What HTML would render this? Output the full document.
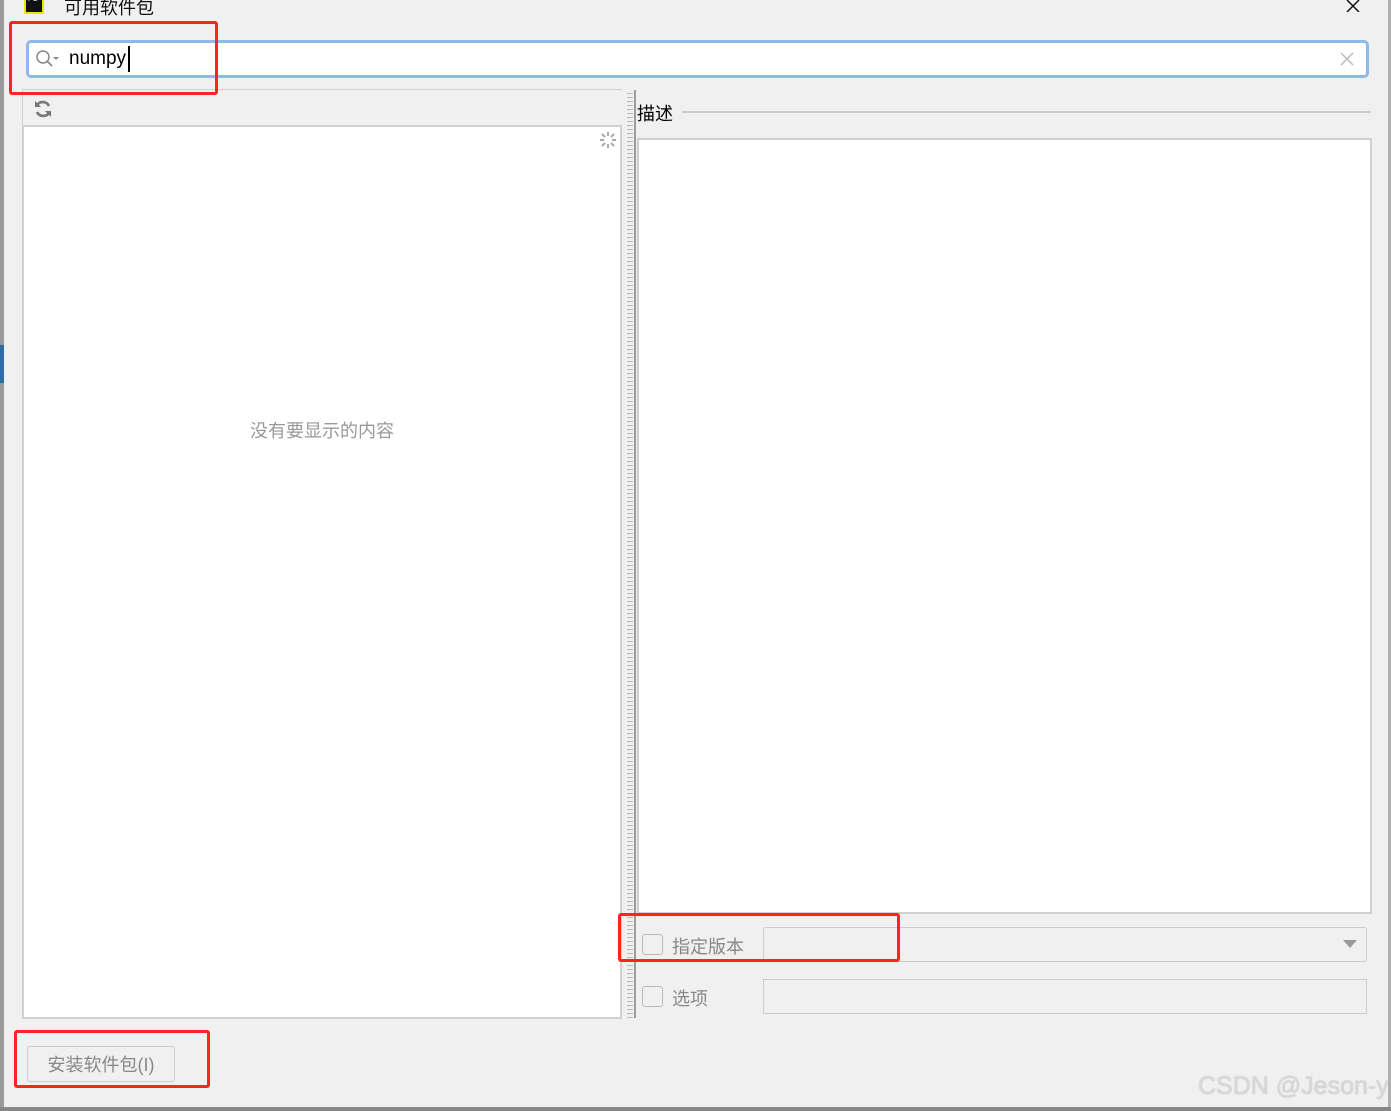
<!DOCTYPE html>
<html><head><meta charset="utf-8"><style>
*{box-sizing:border-box;margin:0;padding:0}
body{width:1391px;height:1111px;background:#f0f0f0;position:relative;overflow:hidden;font-family:"Liberation Sans","Noto Sans CJK SC",sans-serif}
.a{position:absolute}
.red{position:absolute;border:3px solid #f22;border-radius:3px}
</style></head><body>
<div class="a" style="left:0;top:0;width:4px;height:1111px;background:#9a9a9a"></div>
<div class="a" style="left:0;top:345px;width:4px;height:38px;background:#2d6ca8"></div>
<div class="a" style="left:1388px;top:0;width:3px;height:1111px;background:#b0b0b0"></div>
<div class="a" style="left:0;top:1107px;width:1391px;height:4px;background:#888"></div>
<div class="a" style="left:24px;top:-6px;width:20px;height:20px;background:#e4e800;padding:2px"><div style="width:16px;height:16px;background:#111;color:#fff;font-size:7px;line-height:8px;padding-left:2px">PC</div></div>
<div class="a" style="left:64px;top:-6px;font-size:18px;color:#111">可用软件包</div>
<svg class="a" style="left:1345px;top:0" width="18" height="12"><path d="M2 0L14 12M14 0L2 12" stroke="#111" stroke-width="1.5"/></svg>
<div class="a" style="left:26px;top:40px;width:1343px;height:38px;border:3px solid #8ebaeb;border-radius:5px;background:#fff"></div>
<svg class="a" style="left:35px;top:49px" width="28" height="20"><circle cx="8" cy="8" r="6" fill="none" stroke="#888" stroke-width="1.5"/><path d="M12.5 12.5L17 17" stroke="#888" stroke-width="1.8"/><path d="M18 8h6l-3 3z" fill="#888"/></svg>
<div class="a" style="left:69px;top:48px;font-size:19px;color:#000">numpy</div>
<div class="a" style="left:128px;top:46px;width:2px;height:26px;background:#000"></div>
<svg class="a" style="left:1340px;top:52px" width="14" height="14"><path d="M1 1L13 13M13 1L1 13" stroke="#bbb" stroke-width="1.5"/></svg>
<div class="a" style="left:22px;top:89px;width:600px;height:38px;border-top:1px solid #d0d0d0;border-bottom:2px solid #d0d0d0;border-left:1px solid #d0d0d0"></div>
<svg class="a" style="left:33px;top:99px" width="20" height="20" viewBox="0 0 20 20"><path d="M16 7A7 7 0 0 0 4 6M4 13A7 7 0 0 0 16 14" fill="none" stroke="#777" stroke-width="2.6"/><path d="M2 2v6h6z M18 18v-6h-6z" fill="#777"/></svg>
<div class="a" style="left:22px;top:127px;width:600px;height:892px;background:#fff;border:2px solid #d0d0d0;border-top:none"></div>
<svg class="a" style="left:598px;top:130px" width="20" height="20"><g stroke="#aaa" stroke-width="2"><path d="M10 2v4M10 14v4M2 10h4M14 10h4M4 4l3 3M13 13l3 3M16 4l-3 3M4 16l3-3"/></g></svg>
<div class="a" style="left:250px;top:417px;font-size:18px;color:#999">没有要显示的内容</div>
<div class="a" style="left:627px;top:90px;width:6px;height:928px;background:repeating-linear-gradient(#f0f0f0 0 3px,#bbb 3px 4px);"></div>
<div class="a" style="left:634px;top:90px;width:2px;height:928px;background:#9c9c9c"></div>
<div class="a" style="left:637px;top:100px;font-size:18px;color:#000">描述</div>
<div class="a" style="left:682px;top:111px;width:689px;height:2px;background:#ccc"></div>
<div class="a" style="left:637px;top:138px;width:735px;height:776px;background:#fff;border:2px solid #d0d0d0"></div>
<div class="a" style="left:642px;top:934px;width:21px;height:21px;border:1px solid #bbb;border-radius:3px"></div>
<div class="a" style="left:672px;top:933px;font-size:18px;color:#888">指定版本</div>
<div class="a" style="left:763px;top:927px;width:604px;height:35px;border:1px solid #ccc;border-radius:3px"></div>
<svg class="a" style="left:1343px;top:940px" width="14" height="10"><path d="M0 0h14L7 8z" fill="#999"/></svg>
<div class="a" style="left:642px;top:986px;width:21px;height:21px;border:1px solid #bbb;border-radius:3px"></div>
<div class="a" style="left:672px;top:985px;font-size:18px;color:#888">选项</div>
<div class="a" style="left:763px;top:979px;width:604px;height:35px;border:1px solid #ccc"></div>
<div class="a" style="left:27px;top:1046px;width:148px;height:36px;border:1px solid #ccc;border-radius:3px;font-size:18px;color:#888;text-align:center;line-height:36px">安装软件包(I)</div>
<div class="a" style="left:1198px;top:1072px;font-size:25px;color:#d8d8d8;text-shadow:0 0 1px #aaa">CSDN @Jeson-y</div>
<div class="red" style="left:9px;top:21px;width:209px;height:74px"></div>
<div class="red" style="left:618px;top:913px;width:282px;height:49px"></div>
<div class="red" style="left:14px;top:1030px;width:196px;height:58px"></div>
</body></html>
